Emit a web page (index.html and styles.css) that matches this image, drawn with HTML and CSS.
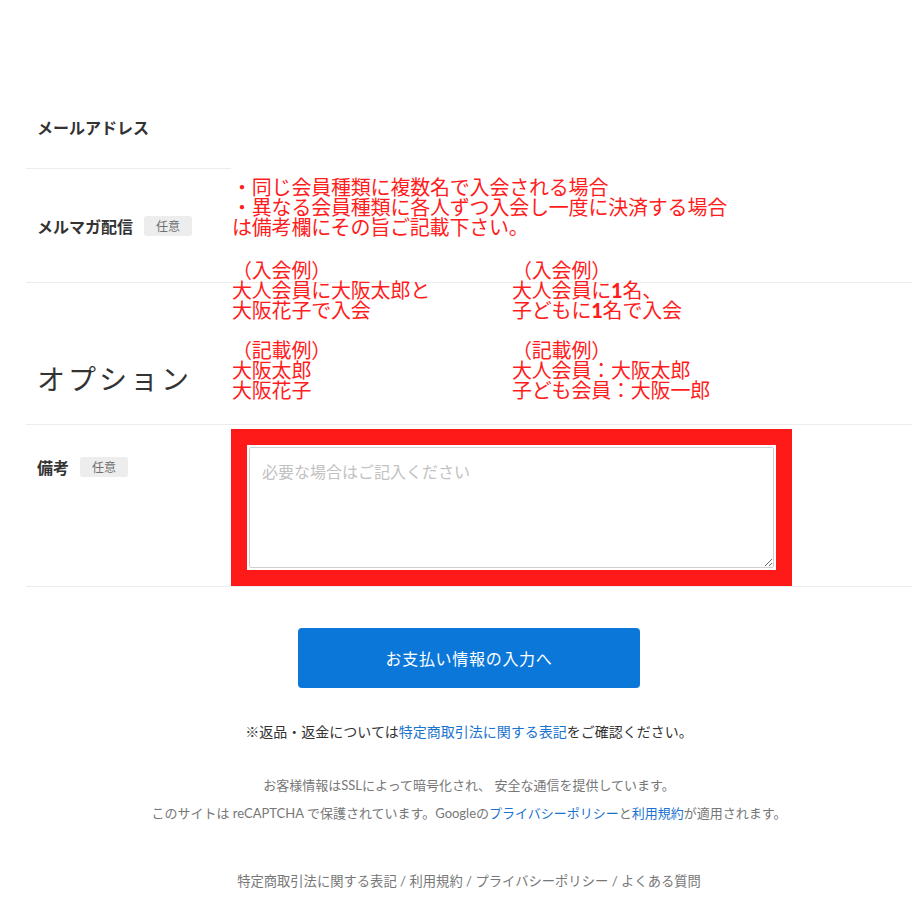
FILE: index.html
```html
<!DOCTYPE html>
<html lang="ja">
<head>
<meta charset="utf-8">
<title>お支払い情報</title>
<link rel="stylesheet" href="styles.css">
</head>
<body>
<div class="page">
  <div class="form">
    <div class="row row-email">
      <div class="label">メールアドレス</div>
      <div class="field"></div>
    </div>
    <div class="row row-mag">
      <div class="label">メルマガ配信<span class="badge">任意</span></div>
      <div class="field"></div>
    </div>
    <h2 class="section">オプション</h2>
    <div class="row row-note">
      <div class="label">備考<span class="badge">任意</span></div>
      <div class="field">
        <div class="highlight">
          <textarea class="note" placeholder="必要な場合はご記入ください"></textarea>
        </div>
      </div>
    </div>

    <div class="annot annot-intro">
      <div>・同じ会員種類に複数名で入会される場合</div>
      <div>・異なる会員種類に各人ずつ入会し一度に決済する場合</div>
      <div>は備考欄にその旨ご記載下さい。</div>
    </div>
    <div class="annot annot-examples">
      <div class="ex-col">
        <div>（入会例）</div>
        <div>大人会員に大阪太郎と</div>
        <div>大阪花子で入会</div>
        <div class="blank"></div>
        <div>（記載例）</div>
        <div>大阪太郎</div>
        <div>大阪花子</div>
      </div>
      <div class="ex-col">
        <div>（入会例）</div>
        <div>大人会員に<b>1</b>名、</div>
        <div>子どもに<b>1</b>名で入会</div>
        <div class="blank"></div>
        <div>（記載例）</div>
        <div>大人会員：大阪太郎</div>
        <div>子ども会員：大阪一郎</div>
      </div>
    </div>
  </div>

  <div class="actions">
    <button class="submit" type="button">お支払い情報の入力へ</button>
  </div>

  <p class="notice">※返品・返金については<a href="#" class="link">特定商取引法に関する表記</a>をご確認ください。</p>

  <div class="secure">
    <p>お客様情報はSSLによって暗号化され、 安全な通信を提供しています。</p>
    <p>このサイトは reCAPTCHA で保護されています。Googleの<a href="#" class="link">プライバシーポリシー</a>と<a href="#" class="link">利用規約</a>が適用されます。</p>
  </div>

  <p class="footer-links">特定商取引法に関する表記 / 利用規約 / プライバシーポリシー / よくある質問</p>
</div>
</body>
</html>
```

FILE: styles.css
```css
* {
  box-sizing: border-box;
}

html, body {
  margin: 0;
  padding: 0;
  background: #ffffff;
}

body {
  font-family: Lato, "Noto Sans CJK JP", sans-serif;
  color: #333333;
}

.page {
  width: 920px;
  padding-bottom: 20px;
}

.form {
  position: relative;
  margin-left: 26px;
  width: 886px;
  padding-top: 85px;
}

.row {
  display: flex;
  border-bottom: 1px solid #ececec;
}

.label {
  width: 205px;
  flex: none;
  display: flex;
  align-items: center;
  gap: 11px;
  padding-left: 11px;
  font-family: "Noto Sans CJK JP", sans-serif;
  font-size: 16px;
  font-weight: 700;
  line-height: 24px;
  color: #333333;
}

.field {
  flex: 1;
}

.row-email {
  height: 84px;
  align-items: center;
}

.row-mag {
  height: 114px;
  align-items: center;
}

.badge {
  display: inline-block;
  padding: 0 12px;
  font-size: 12px;
  font-weight: 400;
  line-height: 20px;
  background: #ededed;
  color: #6f6f6f;
  border-radius: 3px;
}

.section {
  margin: 0;
  padding: 75px 11px 26px;
  font-family: "Noto Sans CJK JP", sans-serif;
  font-size: 28px;
  font-weight: 400;
  line-height: 40px;
  letter-spacing: 3px;
  color: #333333;
  border-bottom: 1px solid #ececec;
}

.row-note {
  align-items: flex-start;
}

.row-note .label {
  padding-top: 30px;
}

.row-note .field {
  padding: 4px 0 0;
}

.highlight {
  width: 561px;
  border: 16px solid #ff1a1a;
  padding: 2px;
  background: #ffffff;
}

.note {
  display: block;
  width: 100%;
  height: 121px;
  margin: 0;
  padding: 11px 12px;
  border: 1px solid #cfcfcf;
  border-radius: 2px;
  font-family: "Noto Sans CJK JP", sans-serif;
  font-size: 16px;
  line-height: 24px;
  color: #333333;
  resize: both;
}

.note::placeholder {
  color: #c2c2c2;
}

.annot {
  position: absolute;
  font-family: "Noto Sans CJK JP", sans-serif;
  font-size: 20px;
  line-height: 20px;
  letter-spacing: -0.2px;
  color: #ff1c1c;
}

.annot-intro {
  top: 168px;
  left: 205px;
  right: -8px;
  padding: 9px 0 10px 1px;
  background: #ffffff;
}

.annot-examples {
  top: 260px;
  left: 206px;
  display: grid;
  grid-template-columns: 280px auto;
}

.annot b {
  font-family: Lato, "Noto Sans CJK JP", sans-serif;
  font-weight: 900;
}

.blank {
  height: 20px;
}

.actions {
  display: flex;
  justify-content: center;
  margin-left: 26px;
  width: 886px;
  padding-top: 41px;
}

.submit {
  width: 342px;
  height: 60px;
  border: none;
  border-radius: 4px;
  background: #0b78d9;
  color: #ffffff;
  font-family: "Noto Sans CJK JP", sans-serif;
  font-size: 16px;
  letter-spacing: 0.7px;
  cursor: pointer;
}

.notice {
  margin: 32px 0 0 26px;
  width: 886px;
  text-align: center;
  font-family: "Noto Sans CJK JP", sans-serif;
  font-size: 14px;
  line-height: 22px;
  color: #333333;
}

.link {
  color: #1a73cf;
  text-decoration: none;
}

.secure {
  margin: 29px 0 0 26px;
  width: 886px;
  text-align: center;
  font-size: 13px;
  line-height: 28px;
  color: #777777;
}

.secure p {
  margin: 0;
}

.footer-links {
  margin: 44px 0 0 26px;
  width: 886px;
  text-align: center;
  font-size: 13.3px;
  line-height: 20px;
  color: #777777;
}
```
